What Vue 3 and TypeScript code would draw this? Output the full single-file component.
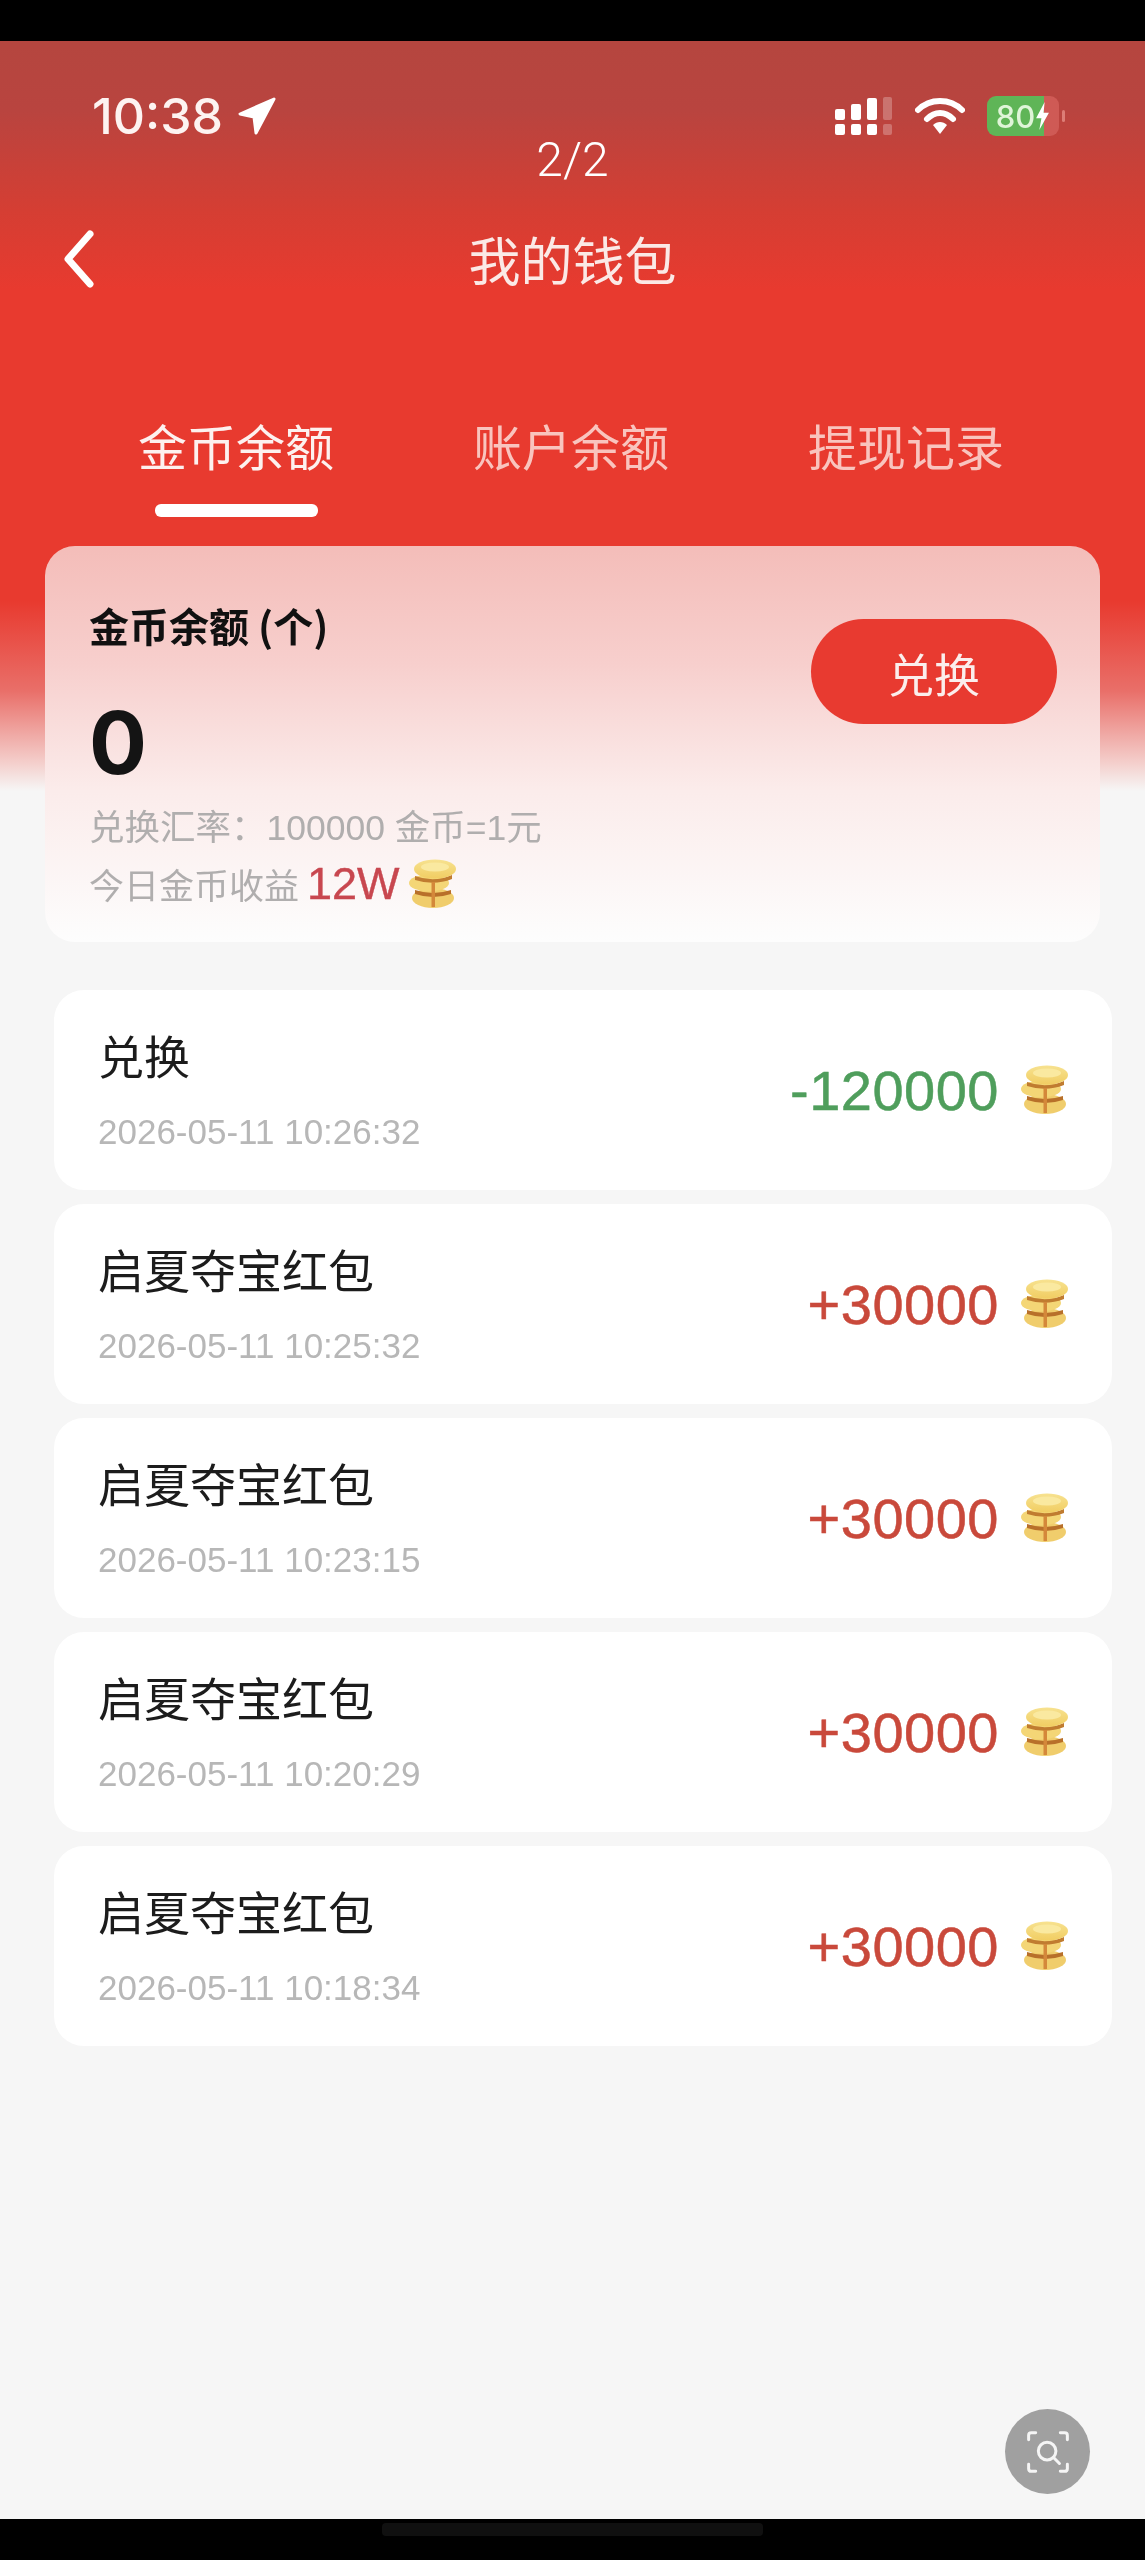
<script setup lang="ts">
interface Rec {
  title: string
  time: string
  amount: string
  minus?: boolean
}

const tabs = ['金币余额', '账户余额', '提现记录']

const records: Rec[] = [
  { title: '兑换', time: '2026-05-11 10:26:32', amount: '-120000', minus: true },
  { title: '启夏夺宝红包', time: '2026-05-11 10:25:32', amount: '+30000' },
  { title: '启夏夺宝红包', time: '2026-05-11 10:23:15', amount: '+30000' },
  { title: '启夏夺宝红包', time: '2026-05-11 10:20:29', amount: '+30000' },
  { title: '启夏夺宝红包', time: '2026-05-11 10:18:34', amount: '+30000' }
]
</script>

<template>
  <div class="phone">
    <div class="black-top"></div>
    <div class="screen">
      <div class="status">
        <div class="clock">
          <span>10:38</span>
          <svg class="loc" viewBox="0 0 40 40"><path d="M37 3 L3 18 L17 21 L19 37 Z" fill="#fff" stroke="#fff" stroke-width="3" stroke-linejoin="round" /></svg>
        </div>
        <div class="status-right">
          <svg class="signal" viewBox="0 0 58 38">
            <g fill="#fff">
              <rect x="0" y="12" width="10" height="11" rx="2" />
              <rect x="0" y="27" width="10" height="11" rx="2" />
              <rect x="16" y="7" width="10" height="16" rx="2" />
              <rect x="16" y="27" width="10" height="11" rx="2" />
              <rect x="32" y="1" width="10" height="22" rx="2" />
              <rect x="32" y="27" width="10" height="11" rx="2" />
            </g>
            <g fill="#fff" opacity="0.25">
              <rect x="48" y="0" width="9" height="23" rx="2" />
              <rect x="48" y="27" width="9" height="11" rx="2" />
            </g>
          </svg>
          <svg class="wifi" viewBox="0 0 50 38">
            <path d="M3 13 C15 1 35 1 47 13" fill="none" stroke="#fff" stroke-width="6" stroke-linecap="round" />
            <path d="M12 22 C20 14 30 14 38 22" fill="none" stroke="#fff" stroke-width="6" stroke-linecap="round" />
            <path d="M18 28 C22 24 28 24 32 28 L25 37 Z" fill="#fff" />
          </svg>
          <div class="battery">
            <div class="batt-body">
              <span class="batt-num">80</span>
              <svg class="bolt" viewBox="0 0 14 26"><path d="M9 0 L1 15 H6 L4 26 L13 10 H8 Z" fill="#fff" /></svg>
            </div>
            <i class="batt-tip"></i>
          </div>
        </div>
      </div>
      <div class="pager">2/2</div>

      <div class="nav">
        <svg class="back" viewBox="0 0 36 60"><path d="M29 5 L7 30 L29 55" fill="none" stroke="#fff" stroke-width="7" stroke-linecap="round" stroke-linejoin="round" /></svg>
        <span>我的钱包</span>
      </div>

      <div class="tabs">
        <div v-for="(t, i) in tabs" :key="t" class="tab" :class="{ on: i === 0 }">
          <span>{{ t }}</span>
          <i v-if="i === 0"></i>
        </div>
      </div>

      <section class="card">
        <div class="card-info">
          <div class="card-title">金币余额 (个)</div>
          <div class="card-value">0</div>
          <div class="card-rate">兑换汇率：100000 金币=1元</div>
          <div class="card-today">
            <span>今日金币收益</span>
            <b>12W</b>
            <svg class="coin" viewBox="0 0 50 50">
              <use href="#coins" />
            </svg>
          </div>
        </div>
        <button class="swap">兑换</button>
      </section>

      <div class="list">
        <div v-for="r in records" :key="r.time" class="row">
          <div class="row-left">
            <div class="row-title">{{ r.title }}</div>
            <div class="row-time">{{ r.time }}</div>
          </div>
          <div class="row-right">
            <span class="amount" :class="{ minus: r.minus }">{{ r.amount }}</span>
            <svg class="coin" viewBox="0 0 50 50">
              <use href="#coins" />
            </svg>
          </div>
        </div>
      </div>

      <div class="lens">
        <svg viewBox="0 0 50 50">
          <g fill="none" stroke="#f5f5f5" stroke-width="3.4" stroke-linecap="round" stroke-linejoin="round">
            <path d="M3 11 V6 Q3 3 6 3 H11" />
            <path d="M39 3 H44 Q47 3 47 6 V11" />
            <path d="M3 39 V44 Q3 47 6 47 H11" />
            <path d="M47 39 V44 Q47 47 44 47 H39" />
            <circle cx="24" cy="24" r="10" />
            <path d="M31 31 L38 38" />
          </g>
        </svg>
      </div>
    </div>
    <div class="black-bottom"><i></i></div>

    <svg class="defs" width="0" height="0">
      <defs>
        <linearGradient id="coinGold" x1="0" y1="0" x2="0" y2="1">
          <stop offset="0" stop-color="#f7e290" />
          <stop offset="1" stop-color="#f1cd62" />
        </linearGradient>
        <g id="coins">
          <ellipse cx="25" cy="39" rx="21" ry="10" fill="#f0cd6c" />
          <path d="M7 31 Q25 37 43 31 L43 35 Q25 41 7 35 Z" fill="#b8702a" />
          <ellipse cx="21" cy="24" rx="20" ry="8.5" fill="#f4d676" />
          <path d="M7 17 Q26 24 44 16 L44 20 Q26 27 7 21 Z" fill="#c07c30" />
          <rect x="23.5" y="23" width="3.5" height="25" fill="#d4883a" />
          <ellipse cx="27" cy="10" rx="21" ry="9.5" fill="url(#coinGold)" />
          <ellipse cx="27" cy="8" rx="14" ry="4.5" fill="#fae9a0" />
        </g>
      </defs>
    </svg>
  </div>
</template>

<style scoped>
.phone {
  width: 1145px;
  height: 2560px;
  display: flex;
  flex-direction: column;
  background: #000;
  font-family: "Noto Sans CJK SC", "Noto Sans", sans-serif;
  overflow: hidden;
}
.black-top { height: 41px; flex: none; background: #000; }
.black-bottom {
  height: 41px;
  flex: none;
  background: #000;
  display: flex;
  justify-content: center;
  padding-top: 4px;
  box-sizing: border-box;
}
.black-bottom i { width: 381px; height: 13px; border-radius: 4px; background: #101010; }
.screen {
  position: relative;
  flex: 1;
  filter: blur(0.6px);
  background-color: #f6f6f6;
  background-image: linear-gradient(180deg, #b5463f 0, #b9443f 70px, #d53e33 170px, #e83a2f 250px, #e83a2f 560px, #e96f69 650px, #f4cfcc 722px, #f6f6f6 750px);
  background-size: 100% 750px;
  background-repeat: no-repeat;
}
.status {
  display: flex;
  justify-content: space-between;
  align-items: center;
  height: 44px;
  padding: 53px 80px 0 92px;
}
.clock {
  display: flex;
  align-items: center;
  gap: 14px;
  color: #fdf3f1;
  font-family: Inter, "Liberation Sans", sans-serif;
  font-size: 50px;
  font-weight: 500;
}
.loc { width: 40px; height: 40px; }
.status-right { display: flex; align-items: center; gap: 22px; }
.signal { width: 58px; height: 38px; }
.wifi { width: 50px; height: 38px; }
.battery { display: flex; align-items: center; gap: 3px; }
.batt-body {
  width: 72px;
  height: 40px;
  border-radius: 9px;
  background: linear-gradient(90deg, #5fb557 0, #5fb557 79%, #cf5a55 79%);
  display: flex;
  align-items: center;
  justify-content: center;
  color: #dff5d8;
  font-family: Inter, "Liberation Sans", sans-serif;
  font-size: 31px;
  font-weight: 500;
}
.batt-num { line-height: 1; }
.bolt { width: 15px; height: 28px; }
.batt-tip { display: block; width: 3px; height: 12px; border-radius: 2px; background: #dd7d76; }
.pager {
  margin-top: -3px;
  height: 50px;
  line-height: 50px;
  text-align: center;
  color: #fff;
  font-family: Roboto, "Liberation Sans", sans-serif;
  font-size: 48px;
  font-weight: 300;
}
.nav {
  position: relative;
  margin-top: 35px;
  height: 76px;
  display: flex;
  align-items: center;
  justify-content: center;
  color: #fbe9e6;
  font-size: 52px;
}
.back { position: absolute; left: 61px; top: 9px; width: 36px; height: 60px; }
.tabs {
  margin-top: 114px;
  padding: 0 83px 0 80px;
  display: flex;
  justify-content: space-between;
}
.tab {
  width: 312px;
  height: 107px;
  display: flex;
  flex-direction: column;
  align-items: center;
  color: #f9c4be;
  font-size: 49px;
  line-height: 70px;
}
.tab.on { color: #fdf1ef; }
.tab i { display: block; width: 163px; height: 13px; margin-top: 24px; border-radius: 6px; background: #fff; }
.card {
  margin: 29px 45px 0;
  height: 396px;
  box-sizing: border-box;
  border-radius: 30px;
  padding: 56px 43px 0 44px;
  display: flex;
  justify-content: space-between;
  align-items: flex-start;
  background: linear-gradient(180deg, #f4bdb9 0, #f7cfcd 30%, #fbeceb 62%, #fdfdfd 100%);
}
.card-title { color: #111; font-size: 40px; font-weight: 700; line-height: 46px; }
.card-value {
  margin-top: 50px;
  color: #141414;
  font-family: Inter, "Liberation Sans", sans-serif;
  font-size: 86px;
  font-weight: 700;
  line-height: 90px;
}
.card-rate {
  margin-top: 17px;
  color: #b0aeae;
  font-family: "Liberation Sans", "Noto Sans CJK SC", sans-serif;
  font-size: 35.5px;
  line-height: 46px;
}
.card-today {
  margin-top: 6px;
  display: flex;
  align-items: center;
  gap: 8px;
  color: #b0aeae;
  font-size: 35px;
  line-height: 54px;
}
.card-today b {
  color: #c8474f;
  font-family: "Liberation Sans", sans-serif;
  font-size: 45px;
  font-weight: 400;
  -webkit-text-stroke: 0.4px #c8474f;
}
.swap {
  margin-top: 17px;
  width: 246px;
  height: 105px;
  border: none;
  border-radius: 53px;
  background: #e83a30;
  color: #fbeeec;
  font-family: inherit;
  font-size: 46px;
}
.list {
  margin: 48px 33px 0 54px;
  display: flex;
  flex-direction: column;
  gap: 14px;
}
.row {
  height: 200px;
  box-sizing: border-box;
  border-radius: 30px;
  background: #fff;
  padding: 0 42px 0 44px;
  display: flex;
  justify-content: space-between;
  align-items: center;
}
.row-left { margin-top: -6px; }
.row-title { color: #1c1c1c; font-size: 46px; line-height: 64px; }
.row-time {
  margin-top: 26px;
  color: #b7b7b7;
  font-family: "Liberation Sans", sans-serif;
  font-size: 35px;
  line-height: 40px;
}
.row-right { display: flex; align-items: center; gap: 21px; }
.amount {
  color: #c9493b;
  font-family: "Liberation Sans", sans-serif;
  font-size: 56px;
  letter-spacing: 0.5px;
  -webkit-text-stroke: 0.5px currentColor;
}
.amount.minus { color: #4f9e5c; }
.coin { width: 50px; height: 50px; flex: none; }
.lens {
  position: absolute;
  left: 1005px;
  bottom: 25px;
  width: 85px;
  height: 85px;
  border-radius: 50%;
  background: #a0a0a0;
  display: flex;
  align-items: center;
  justify-content: center;
}
.lens svg { width: 44px; height: 44px; }
.defs { position: absolute; }
</style>

<style>
html, body { margin: 0; background: #000; }
</style>
